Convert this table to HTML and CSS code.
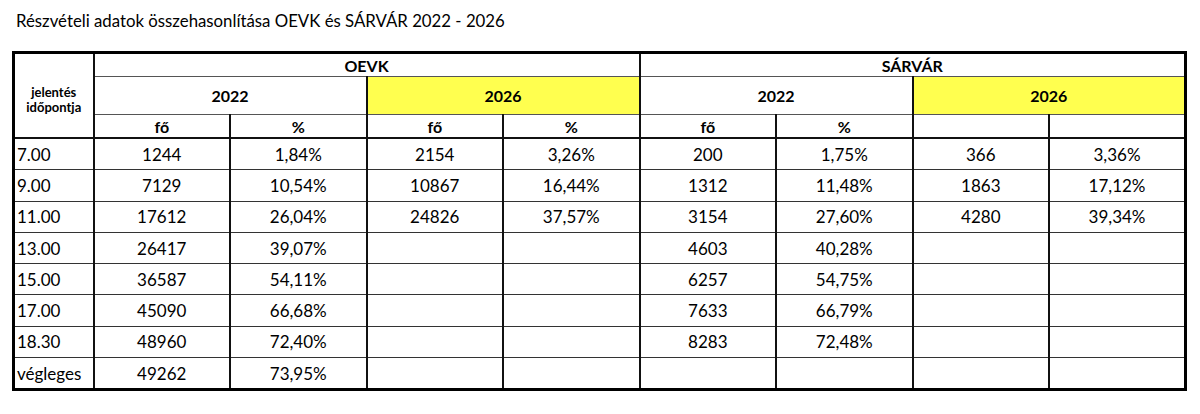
FILE: index.html
```html
<!DOCTYPE html>
<html lang="hu">
<head>
<meta charset="utf-8">
<link rel="stylesheet" href="styles.css">
</head>
<body>
<h1 class="title">Részvételi adatok összehasonlítása OEVK és SÁRVÁR 2022 - 2026</h1>
<table class="grid">
  <colgroup>
    <col class="c-label">
    <col class="c-data"><col class="c-data"><col class="c-data"><col class="c-data">
    <col class="c-data"><col class="c-data"><col class="c-data"><col class="c-data">
  </colgroup>
  <thead>
    <tr class="h1">
      <th class="label-head" rowspan="3">jelentés<br>időpontja</th>
      <th colspan="4">OEVK</th>
      <th colspan="4">SÁRVÁR</th>
    </tr>
    <tr class="h2">
      <th colspan="2">2022</th>
      <th colspan="2" class="yellow">2026</th>
      <th colspan="2">2022</th>
      <th colspan="2" class="yellow">2026</th>
    </tr>
    <tr class="h3">
      <th>fő</th><th>%</th>
      <th class="thin-l">fő</th><th class="thin-l">%</th>
      <th>fő</th><th>%</th>
      <th></th><th class="thin-l"></th>
    </tr>
  </thead>
  <tbody>
    <tr><td class="lbl">7.00</td><td>1244</td><td>1,84%</td><td>2154</td><td>3,26%</td><td>200</td><td>1,75%</td><td>366</td><td>3,36%</td></tr>
    <tr><td class="lbl">9.00</td><td>7129</td><td>10,54%</td><td>10867</td><td>16,44%</td><td>1312</td><td>11,48%</td><td>1863</td><td>17,12%</td></tr>
    <tr><td class="lbl">11.00</td><td>17612</td><td>26,04%</td><td>24826</td><td>37,57%</td><td>3154</td><td>27,60%</td><td>4280</td><td>39,34%</td></tr>
    <tr><td class="lbl">13.00</td><td>26417</td><td>39,07%</td><td></td><td></td><td>4603</td><td>40,28%</td><td></td><td></td></tr>
    <tr><td class="lbl">15.00</td><td>36587</td><td>54,11%</td><td></td><td></td><td>6257</td><td>54,75%</td><td></td><td></td></tr>
    <tr><td class="lbl">17.00</td><td>45090</td><td>66,68%</td><td></td><td></td><td>7633</td><td>66,79%</td><td></td><td></td></tr>
    <tr><td class="lbl">18.30</td><td>48960</td><td>72,40%</td><td></td><td></td><td>8283</td><td>72,48%</td><td></td><td></td></tr>
    <tr class="last"><td class="lbl">végleges</td><td>49262</td><td>73,95%</td><td></td><td></td><td></td><td></td><td></td><td></td></tr>
  </tbody>
</table>
</body>
</html>
```
FILE: styles.css
```css
html, body {
  margin: 0;
  padding: 0;
  background: #ffffff;
}
body {
  font-family: Lato, "Open Sans", sans-serif;
  color: #000;
  padding: 10px 0 0 12px;
}
.title {
  margin: 0 0 20px 4px;
  font-size: 16.8px;
  font-weight: 400;
  line-height: 21px;
  letter-spacing: 0;
}
.grid {
  border-collapse: collapse;
  table-layout: fixed;
  width: 1172px;
  border: 3px solid #000;
}
.c-label { width: 80px; }
.c-data { width: 136.5px; }
.grid th, .grid td {
  border: 2px solid #111;
  padding: 0;
  text-align: center;
  font-size: 17px;
}
.grid th {
  font-weight: 700;
  font-size: 16px;
}
.h1 th { height: 22px; border-bottom: 1px solid #555; }
.h2 th { height: 37px; border-top: 1px solid #555; border-bottom: 1px solid #555; }
.h3 th { height: 22px; border-top: 1px solid #555; border-bottom: 2px solid #111; }
.h1 .label-head {
  font-size: 13px;
  line-height: 15px;
  border-bottom: 2px solid #111;
  padding-top: 8px;
}
.yellow { background: #ffff4f; }
.thin-l { border-left: 1px solid #444 !important; }
.grid tbody td {
  height: 30.3px;
  border-top: 1px solid #333;
  border-bottom: 1px solid #333;
}
.grid tbody tr:first-child td { border-top: 2px solid #111; }
.grid td.lbl {
  text-align: left;
  padding-left: 2px;
}
```
